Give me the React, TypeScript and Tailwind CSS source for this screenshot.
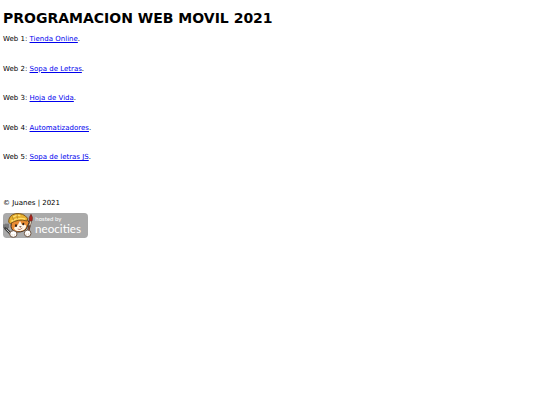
const links = [
  { label: "Web 1", title: "Tienda Online", href: "#tienda-online" },
  { label: "Web 2", title: "Sopa de Letras", href: "#sopa-de-letras" },
  { label: "Web 3", title: "Hoja de Vida", href: "#hoja-de-vida" },
  { label: "Web 4", title: "Automatizadores", href: "#automatizadores" },
  { label: "Web 5", title: "Sopa de letras JS", href: "#sopa-de-letras-js" },
];

const NeocitiesBadge = () => (
  <svg viewBox="0 0 255 75" className="block w-[85px] h-[25px]">
    <rect width="255" height="75" rx="11" fill="#aaaaaa" />
    {/* fork */}
    <path d="M7 46 L27 66" stroke="#3a3a3a" strokeWidth="8" strokeLinecap="round" />
    <path d="M3 34 V45 Q8 53 15 45 V32 M9 32 V50" fill="none" stroke="#4a4a4a" strokeWidth="3" />
    <path d="M10 49 L25 64" stroke="#c8c8c8" strokeWidth="3" />
    {/* brush */}
    <path d="M84 4 Q76 14 79 25 L87 24 Q91 13 84 4Z" fill="#b3221d" stroke="#6b2a20" strokeWidth="2" />
    <path d="M83 24 L74 60" stroke="#4d3023" strokeWidth="7" />
    <path d="M83 25 L80 37" stroke="#e4d6bd" strokeWidth="4" />
    <path d="M79 40 L75 56" stroke="#985037" strokeWidth="3" />
    {/* head */}
    <path d="M26 22 L24 40 Q25 54 42 57 Q64 58 71 45 L78 29 L71 15Z" fill="#e88b33" stroke="#47301e" strokeWidth="3" />
    <path d="M44 37 L51 24 L57 35 Q71 32 69 42 Q66 52 52 54 Q34 55 33 44Z" fill="#fff6e9" />
    {/* helmet */}
    <path d="M17 28 Q16 7 38 2 Q61 -1 74 16 L72 24 Q45 16 22 32Z" fill="#e7b02f" stroke="#80581c" strokeWidth="3" />
    <path d="M29 13 Q40 5 52 8 M25 25 Q45 12 67 18" fill="none" stroke="#ffdf70" strokeWidth="4" />
    <path d="M43 4 Q41 12 44 17 M28 10 L32 22" fill="none" stroke="#9c6f20" strokeWidth="2" />
    <ellipse cx="39" cy="38" rx="3" ry="4" fill="#291b16" />
    <ellipse cx="61" cy="33" rx="3" ry="4" fill="#291b16" />
    <path d="M48 40 H56 L52 44Z" fill="#6b382a" />
    <path d="M44 48 Q51 53 58 45" fill="none" stroke="#a24b35" strokeWidth="2" />
    {/* paws */}
    <ellipse cx="31" cy="63" rx="11" ry="10" fill="#fff" stroke="#6d5543" strokeWidth="3" />
    <path d="M27 68 V63 M34 68 V63" stroke="#e2c9ae" strokeWidth="2" />
    <ellipse cx="74" cy="61" rx="10" ry="10" fill="#fff" stroke="#6d5543" strokeWidth="3" />
    <path d="M71 67 V61 M77 66 V60" stroke="#e2c9ae" strokeWidth="2" />
    <text x="97" y="24" className="font-['Lato',sans-serif] text-[18px]" fill="#fff">
      hosted by
    </text>
    <text x="96" y="60" className="font-['Lato',sans-serif] text-[35px]" fill="#fff">
      neocities
    </text>
  </svg>
);

const App = () => {
  return (
    <main className="px-[3px] py-1 font-['DejaVu_Sans',sans-serif] text-[7px] leading-[10px] text-black">
      <h1 className="mt-1 text-[14px] leading-5 font-bold">PROGRAMACION WEB MOVIL 2021</h1>
      <ul className="mt-1.5 grid h-32 content-between">
        {links.map((link) => (
          <li key={link.label}>
            {link.label}:{" "}
            <a href={link.href} className="text-[#0000ee] underline">
              {link.title}
            </a>
            .
          </li>
        ))}
      </ul>
      <footer className="mt-9">
        <p>© Juanes | 2021</p>
        <a href="https://neocities.org" aria-label="Neocities" className="mt-[5px] inline-block">
          <NeocitiesBadge />
        </a>
      </footer>
    </main>
  );
};

export default App;
